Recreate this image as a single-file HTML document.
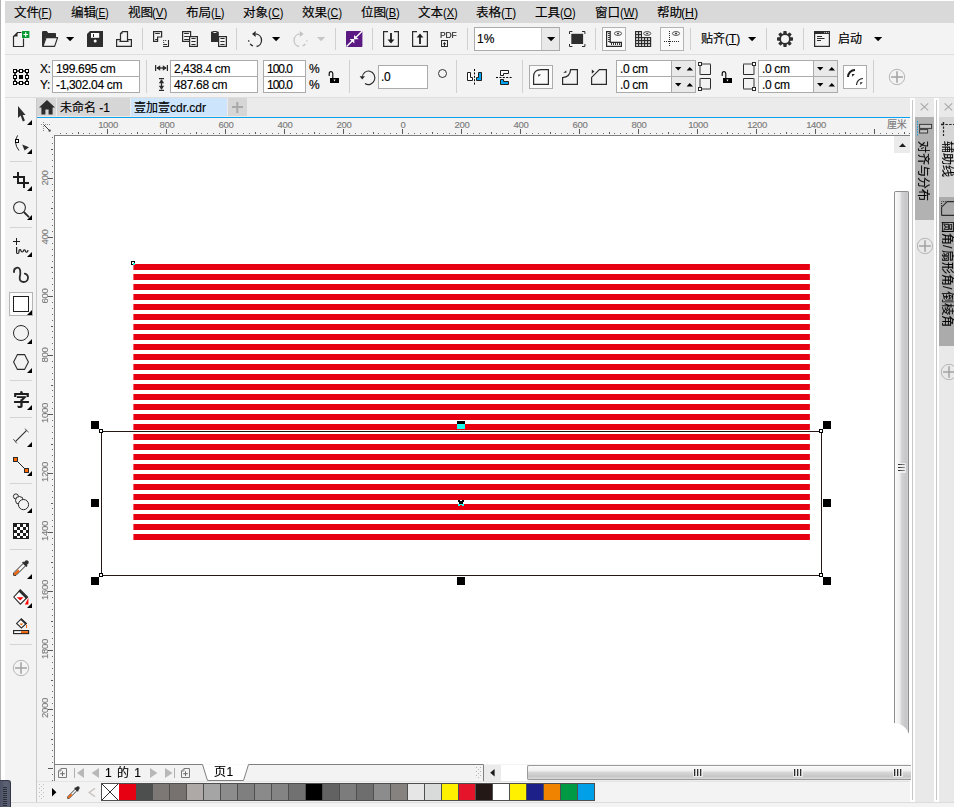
<!DOCTYPE html>
<html lang="zh-CN">
<head>
<meta charset="utf-8">
<title>CorelDRAW</title>
<style>
html,body{margin:0;padding:0;}
body{width:954px;height:807px;overflow:hidden;background:#f3f3f3;font-family:"Liberation Sans","Noto Sans CJK SC",sans-serif;font-size:12px;color:#000;-webkit-text-stroke:0.15px;}
#app{position:relative;width:954px;height:807px;overflow:hidden;background:#f3f3f3;}
.a{position:absolute;}
.a svg{display:block;}
svg{overflow:visible;}
.menu{position:absolute;top:1.5px;height:22px;line-height:22px;font-size:12px;white-space:nowrap;color:#000;transform:scaleX(1.05);transform-origin:0 50%;}
.menu u{text-decoration:underline;text-underline-offset:0.5px;text-decoration-thickness:1px;}
.menu i{font-style:normal;-webkit-text-stroke:0;display:inline-block;transform:scaleX(0.87);transform-origin:0 50%;}
.vsep{position:absolute;width:1px;background:#d0d0d0;}
.inp{position:absolute;box-sizing:border-box;background:#fff;border:1px solid #ababab;font-size:12px;line-height:17px;letter-spacing:-0.33px;padding-left:3px;white-space:nowrap;overflow:hidden;color:#000;}
.lbl{position:absolute;font-size:12px;line-height:14px;white-space:nowrap;}
.rl{position:absolute;font-size:9.5px;line-height:10px;letter-spacing:-0.35px;color:#7c7c7c;white-space:nowrap;}
.rv{position:absolute;font-size:9.5px;line-height:10px;letter-spacing:-0.35px;color:#7c7c7c;white-space:nowrap;transform-origin:0 0;transform:rotate(-90deg);}
.h8{position:absolute;width:8px;height:8px;background:#000;}
.sw{position:absolute;top:783px;width:17px;height:18px;box-sizing:border-box;border:1px solid #5a5a5a;border-left:none;}
.tri{position:absolute;width:0;height:0;border-style:solid;}
.fly{position:absolute;width:0;height:0;border-style:solid;border-width:0 0 5px 5px;border-color:transparent transparent #000 transparent;}
.tsep{position:absolute;left:10px;width:22px;height:1px;background:#d4d4d4;}
</style>
</head>
<body>
<div id="app">

<!-- window frame + menu bar -->
<div class="a" style="left:0;top:0;width:954px;height:1px;background:#fff"></div>
<div class="a" style="left:0;top:0;width:1px;height:807px;background:#b2b2b2"></div>
<div class="a" style="left:1px;top:0;width:4px;height:807px;background:#fff"></div>
<div class="a" style="left:5px;top:1px;width:949px;height:22px;background:#d9d9d9"></div>
<div class="menu" style="left:14px">文件</div><div class="menu" style="left:38.2px"><i style="transform:scaleX(0.855)">(<u>F</u>)</i></div>
<div class="menu" style="left:71px">编辑</div><div class="menu" style="left:95.3px"><i style="transform:scaleX(0.816)">(<u>E</u>)</i></div>
<div class="menu" style="left:128px">视图</div><div class="menu" style="left:151.9px"><i style="transform:scaleX(0.920)">(<u>V</u>)</i></div>
<div class="menu" style="left:186px">布局</div><div class="menu" style="left:210.5px"><i style="transform:scaleX(0.876)">(<u>L</u>)</i></div>
<div class="menu" style="left:243px">对象</div><div class="menu" style="left:268.1px"><i style="transform:scaleX(0.880)">(<u>C</u>)</i></div>
<div class="menu" style="left:302px">效果</div><div class="menu" style="left:327.0px"><i style="transform:scaleX(0.855)">(<u>C</u>)</i></div>
<div class="menu" style="left:361px">位图</div><div class="menu" style="left:385.2px"><i style="transform:scaleX(0.881)">(<u>B</u>)</i></div>
<div class="menu" style="left:418px">文本</div><div class="menu" style="left:443.4px"><i style="transform:scaleX(0.881)">(<u>X</u>)</i></div>
<div class="menu" style="left:476px">表格</div><div class="menu" style="left:501.3px"><i style="transform:scaleX(0.937)">(<u>T</u>)</i></div>
<div class="menu" style="left:535px">工具</div><div class="menu" style="left:560.1px"><i style="transform:scaleX(0.862)">(<u>O</u>)</i></div>
<div class="menu" style="left:594.5px">窗口</div><div class="menu" style="left:619.8px"><i style="transform:scaleX(0.898)">(<u>W</u>)</i></div>
<div class="menu" style="left:656.5px">帮助</div><div class="menu" style="left:681.3px"><i style="transform:scaleX(0.979)">(<u>H</u>)</i></div>
<!-- bar separators -->
<div class="a" style="left:5px;top:54px;width:949px;height:1px;background:#dedede"></div>
<div class="a" style="left:5px;top:97px;width:949px;height:1px;background:#dedede"></div>

<!-- standard toolbar -->
<div class="vsep" style="left:142px;top:28px;height:22px"></div>
<div class="vsep" style="left:236px;top:28px;height:22px"></div>
<div class="vsep" style="left:335px;top:28px;height:22px"></div>
<div class="vsep" style="left:372px;top:28px;height:22px"></div>
<div class="vsep" style="left:467px;top:28px;height:22px"></div>
<div class="vsep" style="left:595px;top:28px;height:22px"></div>
<div class="vsep" style="left:690px;top:28px;height:22px"></div>
<div class="vsep" style="left:766px;top:28px;height:22px"></div>
<div class="vsep" style="left:803px;top:28px;height:22px"></div>
<!-- new -->
<div class="a" style="left:13px;top:31px"><svg width="17" height="16" viewBox="0 0 17 16"><path d="M8.5 1.5H4.5L0.5 5.5V15.5H10.5V7.5" fill="none" stroke="#2b2b2b" stroke-width="1.2"/><path d="M0.5 5.5L4.5 1.5V5.5Z" fill="#2b2b2b"/><rect x="9" y="0" width="7.4" height="7" fill="#069b31"/><path d="M12.7 1.2V5.8M10.4 3.5H15" stroke="#fff" stroke-width="1.2" fill="none"/></svg></div>
<!-- open -->
<div class="a" style="left:42px;top:31px"><svg width="17" height="16" viewBox="0 0 17 16"><path d="M0 1.2Q0 0 1.2 0H4.8L6.2 2H13.2Q14 2 14 2.8V6H4L0.9 15.6H0Z" fill="#2e2e2e"/><path d="M4.1 6.6H15.6L12.6 15.4H1Z" fill="#f3f3f3" stroke="#2e2e2e" stroke-width="1.2" stroke-linejoin="round"/></svg></div>
<div class="a" style="left:66px;top:37px"><svg width="8" height="5" viewBox="0 0 8 5"><path d="M0 0H8.2L4.1 4.3Z" fill="#000"/></svg></div>
<!-- save -->
<div class="a" style="left:87px;top:31px"><svg width="16" height="16" viewBox="0 0 16 16"><path d="M3 0H16V16H0V3Z" fill="#2e2e2e"/><rect x="4" y="2" width="8.2" height="4.8" fill="#fff"/><rect x="6" y="3" width="1" height="3" fill="#2e2e2e"/><circle cx="8.2" cy="10" r="1.5" fill="#fff"/></svg></div>
<!-- print -->
<div class="a" style="left:116px;top:31px"><svg width="16" height="16" viewBox="0 0 16 16"><path d="M4.5 8.6H0.6V15.4H15.4V8.6H11.5" fill="none" stroke="#2b2b2b" stroke-width="1.2"/><path d="M4.5 10.4V2.6L6.6 0.6H11.5V10.4" fill="none" stroke="#2b2b2b" stroke-width="1.2"/><path d="M3.4 10.4H12.6" stroke="#2b2b2b" stroke-width="1.2"/><path d="M6.2 1.6V2.6H5.2" fill="none" stroke="#2b2b2b" stroke-width="0.8"/></svg></div>
<!-- copy properties -->
<div class="a" style="left:153px;top:31px"><svg width="16" height="16" viewBox="0 0 16 16"><path d="M0.6 0.6H8.6V6H4.6V10.4H0.6Z" fill="none" stroke="#2b2b2b" stroke-width="1.2"/><path d="M2.2 2.5H6.8M2.2 8.5H4" stroke="#2b2b2b" stroke-width="1"/><path d="M15.5 9V15.5H10" fill="none" stroke="#2b2b2b" stroke-width="1.1"/><path d="M10.2 9.5H11.2M12.2 9.5H13.2M10.2 11.5H11.2M10.2 13.5H14" stroke="#2b2b2b" stroke-width="1"/></svg></div>
<!-- copy -->
<div class="a" style="left:182px;top:31px"><svg width="16" height="16" viewBox="0 0 16 16"><path d="M7.6 10.4H0.6V0.6H8.6V5" fill="none" stroke="#2b2b2b" stroke-width="1.2"/><path d="M2.2 2.5H6.9M2.2 5.5H6.9M2.2 8.5H6.9" stroke="#2b2b2b" stroke-width="1"/><rect x="7.6" y="5.6" width="7.8" height="9.8" fill="#f3f3f3" stroke="#2b2b2b" stroke-width="1.2"/><path d="M9.4 7.5H13.6M9.4 10.5H13.6M9.4 13.5H13.6" stroke="#2b2b2b" stroke-width="1"/></svg></div>
<!-- paste -->
<div class="a" style="left:211px;top:31px"><svg width="16" height="16" viewBox="0 0 16 16"><path d="M0 1.2Q0 0.6 0.6 0.6H1.5Q1.8 0 2.4 0H5.4Q6 0 6.3 0.6H7.2Q7.8 0.6 7.8 1.2V11H0Z" fill="#2e2e2e"/><path d="M2.4 1.5H5.4" stroke="#fff" stroke-width="0.9"/><rect x="7.6" y="5.6" width="7.8" height="9.8" fill="#f3f3f3" stroke="#2b2b2b" stroke-width="1.2"/><path d="M9.4 7.5H13.6M9.4 10.5H13.6M9.4 13.5H13.6" stroke="#2b2b2b" stroke-width="1"/></svg></div>
<!-- undo -->
<div class="a" style="left:247px;top:31px"><svg width="17" height="16" viewBox="0 0 17 16"><path d="M8.8 2.9A6.4 6.4 0 0 1 9.6 15.5" fill="none" stroke="#2b2b2b" stroke-width="1.3"/><path d="M6 15A6.4 6.4 0 0 1 3.2 12.9" fill="none" stroke="#2b2b2b" stroke-width="1.3"/><path d="M1.9 10.6L1.5 9.3" fill="none" stroke="#2b2b2b" stroke-width="1.3"/><path d="M5 2.9L8.7 0V5.9Z" fill="#2b2b2b"/></svg></div>
<div class="a" style="left:272px;top:37px"><svg width="8" height="5" viewBox="0 0 8 5"><path d="M0 0H8.2L4.1 4.3Z" fill="#000"/></svg></div>
<!-- redo (disabled) -->
<div class="a" style="left:292px;top:31px"><svg width="17" height="16" viewBox="0 0 17 16"><g transform="translate(16.6 0) scale(-1 1)"><path d="M8.8 2.9A6.4 6.4 0 0 1 9.6 15.5" fill="none" stroke="#c3c3c3" stroke-width="1.3"/><path d="M6 15A6.4 6.4 0 0 1 3.2 12.9" fill="none" stroke="#c3c3c3" stroke-width="1.3"/><path d="M1.9 10.6L1.5 9.3" fill="none" stroke="#c3c3c3" stroke-width="1.3"/><path d="M5 2.9L8.7 0V5.9Z" fill="#c3c3c3"/></g></svg></div>
<div class="a" style="left:317px;top:37px"><svg width="8" height="5" viewBox="0 0 8 5"><path d="M0 0H8.2L4.1 4.3Z" fill="#c6c6c6"/></svg></div>
<!-- search content / connect -->
<div class="a" style="left:346px;top:31px"><svg width="17" height="16" viewBox="0 0 17 16"><rect x="0" y="0" width="16.4" height="16" rx="0.8" fill="#5a1a82"/><path d="M16 0.2L10 6.2M6.4 9.8L0.6 15.6" stroke="#fff" stroke-width="1.4"/><path d="M8 8.3V3.9L12.7 8.3Z" fill="#fff"/><path d="M8.3 8V12.4L3.6 8Z" fill="#fff"/></svg></div>
<!-- import -->
<div class="a" style="left:383px;top:31px"><svg width="16" height="16" viewBox="0 0 16 16"><path d="M5 0.6H0.6V15.4H15.4V0.6H11" fill="none" stroke="#2b2b2b" stroke-width="1.2"/><path d="M8 2V11" stroke="#1e1e1e" stroke-width="1.8"/><path d="M4.6 8.4L8 12.4L11.4 8.4Z" fill="#1e1e1e"/></svg></div>
<!-- export -->
<div class="a" style="left:412px;top:31px"><svg width="16" height="16" viewBox="0 0 16 16"><path d="M5 0.6H0.6V15.4H15.4V0.6H11" fill="none" stroke="#2b2b2b" stroke-width="1.2"/><path d="M8 4V13" stroke="#1e1e1e" stroke-width="1.8"/><path d="M4.6 6.6L8 2.6L11.4 6.6Z" fill="#1e1e1e"/></svg></div>
<!-- pdf -->
<div class="a" style="left:440px;top:31px;width:18px;height:8px;font-size:8.5px;line-height:8px;letter-spacing:-0.1px;color:#1a1a1a;will-change:transform;font-family:'Liberation Sans',sans-serif">PDF</div>
<div class="a" style="left:441px;top:40px"><svg width="8" height="7" viewBox="0 0 8 7"><rect x="0.5" y="0.5" width="6" height="6" fill="none" stroke="#2b2b2b" stroke-width="1"/><path d="M3.5 2.5V6" stroke="#2b2b2b" stroke-width="1"/><path d="M1.6 4.2L3.5 2L5.4 4.2Z" fill="#2b2b2b"/></svg></div>
<!-- zoom combo -->
<div class="a" style="left:474px;top:27px;width:86px;height:24px;box-sizing:border-box;border:1px solid #ababab;background:#fff"></div>
<div class="a" style="left:541px;top:28px;width:18px;height:22px;background:#e9e9e9;border-left:1px solid #c4c4c4;box-sizing:border-box"></div>
<div class="a" style="left:547px;top:37px"><svg width="8" height="5" viewBox="0 0 8 5"><path d="M0 0H8.2L4.1 4.3Z" fill="#000"/></svg></div>
<div class="lbl" style="left:477px;top:32px">1%</div>
<!-- full screen preview -->
<div class="a" style="left:569px;top:31px"><svg width="16" height="16" viewBox="0 0 16 16"><rect x="2.3" y="2.8" width="11.8" height="10.2" fill="#2e2e2e"/><path d="M0.5 3V0.5H3.4M13 0.5H15.9V3M15.9 13V15.5H13M3.4 15.5H0.5V13" fill="none" stroke="#2b2b2b" stroke-width="1"/></svg></div>
<!-- show rulers (active) -->
<div class="a" style="left:602px;top:27px;width:24px;height:24px;box-sizing:border-box;border:1px solid #b4b4b4;background:#fafafa"></div>
<div class="a" style="left:606px;top:31px"><svg width="16" height="16" viewBox="0 0 16 16"><path d="M0.6 0.6H4.2V11.4H15.4V15.4H0.6Z" fill="none" stroke="#2b2b2b" stroke-width="1.2"/><path d="M2 2.5H4M2 4.5H4M2 6.5H4M2 8.5H4M2 10.5H4M5.5 12V14M7.5 12V14M9.5 12V14M11.5 12V14M13.5 12V14" stroke="#3a3a3a" stroke-width="1" shape-rendering="crispEdges"/><ellipse cx="12" cy="2.5" rx="3.6" ry="1.9" fill="none" stroke="#3a3a3a" stroke-width="0.9"/><rect x="11" y="1.9" width="2" height="1.3" fill="#3a3a3a"/></svg></div>
<!-- show grid -->
<div class="a" style="left:635px;top:31px"><svg width="17" height="16" viewBox="0 0 17 16"><path d="M0 0H7V6H16.2V16H0Z" fill="#2b2b2b"/><g fill="#fff"><rect x="1.2" y="1.2" width="1.7" height="1.7"/><rect x="4.2" y="1.2" width="1.7" height="1.7"/><rect x="1.2" y="4.2" width="1.7" height="1.7"/><rect x="4.2" y="4.2" width="1.7" height="1.7"/><rect x="1.2" y="7.2" width="1.7" height="1.7"/><rect x="4.2" y="7.2" width="1.7" height="1.7"/><rect x="7.2" y="7.2" width="1.7" height="1.7"/><rect x="10.2" y="7.2" width="1.7" height="1.7"/><rect x="13.2" y="7.2" width="1.7" height="1.7"/><rect x="1.2" y="10.2" width="1.7" height="1.7"/><rect x="4.2" y="10.2" width="1.7" height="1.7"/><rect x="7.2" y="10.2" width="1.7" height="1.7"/><rect x="10.2" y="10.2" width="1.7" height="1.7"/><rect x="13.2" y="10.2" width="1.7" height="1.7"/><rect x="1.2" y="13.2" width="1.7" height="1.7"/><rect x="4.2" y="13.2" width="1.7" height="1.7"/><rect x="7.2" y="13.2" width="1.7" height="1.7"/><rect x="10.2" y="13.2" width="1.7" height="1.7"/><rect x="13.2" y="13.2" width="1.7" height="1.7"/></g><ellipse cx="12.2" cy="2.5" rx="3.6" ry="1.9" fill="#f3f3f3" stroke="#3a3a3a" stroke-width="0.9"/><rect x="11.2" y="1.9" width="2" height="1.3" fill="#3a3a3a"/></svg></div>
<!-- show guidelines (active) -->
<div class="a" style="left:660px;top:27px;width:24px;height:24px;box-sizing:border-box;border:1px solid #b4b4b4;background:#fafafa"></div>
<div class="a" style="left:664px;top:31px"><svg width="16" height="16" viewBox="0 0 16 16"><path d="M5.5 0V16" stroke="#2b2b2b" stroke-width="1" stroke-dasharray="1 1"/><path d="M0 10.5H16" stroke="#2b2b2b" stroke-width="1" stroke-dasharray="1 1"/><ellipse cx="12" cy="2.5" rx="3.6" ry="1.9" fill="none" stroke="#3a3a3a" stroke-width="0.9"/><rect x="11" y="1.9" width="2" height="1.3" fill="#3a3a3a"/></svg></div>
<!-- snap to -->
<div class="lbl" style="left:701px;top:32px">贴齐(<u style="text-underline-offset:1px">T</u>)</div>
<div class="a" style="left:748px;top:37px"><svg width="8" height="5" viewBox="0 0 8 5"><path d="M0 0H8.2L4.1 4.3Z" fill="#000"/></svg></div>
<!-- options gear -->
<div class="a" style="left:777px;top:31px"><svg width="16" height="16" viewBox="0 0 16 16"><g fill="#2e2e2e"><rect x="6.3" y="0" width="3.4" height="16" rx="0.7"/><rect x="6.3" y="0" width="3.4" height="16" rx="0.7" transform="rotate(45 8 8)"/><rect x="6.3" y="0" width="3.4" height="16" rx="0.7" transform="rotate(90 8 8)"/><rect x="6.3" y="0" width="3.4" height="16" rx="0.7" transform="rotate(135 8 8)"/><circle cx="8" cy="8" r="5.8"/></g><circle cx="8" cy="8" r="4" fill="#f3f3f3"/></svg></div>
<!-- launch -->
<div class="a" style="left:814px;top:31px"><svg width="16" height="16" viewBox="0 0 16 16"><rect x="0.6" y="0.6" width="14.8" height="14.8" fill="none" stroke="#2b2b2b" stroke-width="1.2"/><rect x="0.6" y="0.6" width="14.8" height="2.4" fill="#2b2b2b"/><path d="M10.2 1.6H11.2M12 1.6H13M13.8 1.6H14.8" stroke="#fff" stroke-width="0.8"/><path d="M3 5.5H8M3 7.5H10.5M3 9.5H7" stroke="#2b2b2b" stroke-width="1"/></svg></div>
<div class="lbl" style="left:838px;top:32px">启动</div>
<div class="a" style="left:874px;top:37px"><svg width="8" height="5" viewBox="0 0 8 5"><path d="M0 0H8.2L4.1 4.3Z" fill="#000"/></svg></div>

<!-- property bar -->
<div class="vsep" style="left:146px;top:60px;height:33px"></div>
<div class="vsep" style="left:349px;top:60px;height:33px"></div>
<div class="vsep" style="left:456px;top:60px;height:33px"></div>
<div class="vsep" style="left:522px;top:60px;height:33px"></div>
<div class="vsep" style="left:873px;top:60px;height:33px"></div>
<!-- object origin -->
<div class="a" style="left:13px;top:69px"><svg width="16" height="16" viewBox="0 0 16 16"><path d="M2 2H14V14H2Z" fill="none" stroke="#000" stroke-width="1.6"/><g fill="#fff" stroke="#000" stroke-width="1"><rect x="0.5" y="0.5" width="3" height="3"/><rect x="6.5" y="0.5" width="3" height="3"/><rect x="12.5" y="0.5" width="3" height="3"/><rect x="0.5" y="6.5" width="3" height="3"/><rect x="12.5" y="6.5" width="3" height="3"/><rect x="0.5" y="12.5" width="3" height="3"/><rect x="6.5" y="12.5" width="3" height="3"/><rect x="12.5" y="12.5" width="3" height="3"/></g><rect x="6" y="6" width="4" height="4" fill="#000"/></svg></div>
<div class="lbl" style="left:40px;top:61.5px;letter-spacing:-0.4px">X:</div>
<div class="lbl" style="left:40px;top:77.5px;letter-spacing:-0.4px">Y:</div>
<div class="inp" style="left:52px;top:60px;width:88px;height:17px">199.695 cm</div>
<div class="inp" style="left:52px;top:76px;width:88px;height:17px">-1,302.04 cm</div>
<!-- size -->
<div class="a" style="left:155px;top:65px"><svg width="13" height="6" viewBox="0 0 13 6"><path d="M0.6 0V6M12.4 0V6" stroke="#2b2b2b" stroke-width="1.2"/><path d="M2 3H11" stroke="#2b2b2b" stroke-width="1.3"/><path d="M1.2 3L5.2 0.3V5.7ZM11.8 3L7.8 0.3V5.7Z" fill="#2b2b2b"/></svg></div>
<div class="a" style="left:159px;top:78px"><svg width="5" height="13" viewBox="0 0 5 13"><path d="M0 0.6H5M0 12.4H5" stroke="#2b2b2b" stroke-width="1.2"/><path d="M2.5 2V11" stroke="#2b2b2b" stroke-width="1.3"/><path d="M2.5 1.2L-0.2 5.2H5.2ZM2.5 11.8L-0.2 7.8H5.2Z" fill="#2b2b2b"/></svg></div>
<div class="inp" style="left:170px;top:60px;width:88px;height:17px">2,438.4 cm</div>
<div class="inp" style="left:170px;top:76px;width:88px;height:17px">487.68 cm</div>
<div class="inp" style="left:263px;top:60px;width:43px;height:17px;letter-spacing:-1px">100.0</div>
<div class="inp" style="left:263px;top:76px;width:43px;height:17px;letter-spacing:-1px">100.0</div>
<div class="lbl" style="left:309px;top:61.5px;letter-spacing:-0.5px">%</div>
<div class="lbl" style="left:309px;top:77.5px;letter-spacing:-0.5px">%</div>
<!-- lock ratio -->
<div class="a" style="left:328px;top:71px"><svg width="11" height="12" viewBox="0 0 11 12"><path d="M1.2 5V2.6Q1.2 0.6 3 0.6Q4.8 0.6 4.8 2.6V7" fill="none" stroke="#000" stroke-width="1.1"/><rect x="2" y="7" width="9" height="5" fill="#000"/><path d="M5.5 8.4H7.5L6.5 10.4Z" fill="#fff"/></svg></div>
<!-- rotation -->
<div class="a" style="left:359px;top:70px"><svg width="16" height="15" viewBox="0 0 16 15"><path d="M3.2 7.5A6.3 6.8 0 1 1 6 13.5" fill="none" stroke="#2b2b2b" stroke-width="1.1"/><path d="M0.6 6.2H6L3.2 9.6Z" fill="#2b2b2b"/></svg></div>
<div class="inp" style="left:378px;top:65px;width:50px;height:24px;line-height:22px;padding-left:2px">.0</div>
<div class="a" style="left:438px;top:69px;width:9px;height:9px;box-sizing:border-box;border:1.2px solid #333;border-radius:50%"></div>
<!-- mirror h -->
<div class="a" style="left:467px;top:69px"><svg width="16" height="16" viewBox="0 0 16 16"><path d="M7.5 0V16" stroke="#000" stroke-width="1" stroke-dasharray="2 1.4"/><path d="M0.5 3.5H3.5V8.5H5.5V11.5H0.5Z" fill="#fff" stroke="#1e1e1e" stroke-width="1"/><path d="M14.5 3.5H11.5V8.5H9.5V11.5H14.5Z" fill="#00a2f2" stroke="#1e1e1e" stroke-width="1"/></svg></div>
<!-- mirror v -->
<div class="a" style="left:496px;top:70px"><svg width="16" height="16" viewBox="0 0 16 16"><path d="M0 7.5H16" stroke="#000" stroke-width="1" stroke-dasharray="2 1.4"/><path d="M4.5 0.5H12.5V3.5H7.5V5.5H4.5Z" fill="#fff" stroke="#1e1e1e" stroke-width="1"/><path d="M4.5 14.5H12.5V11.5H7.5V9.5H4.5Z" fill="#00a2f2" stroke="#1e1e1e" stroke-width="1"/></svg></div>
<!-- corner types -->
<div class="a" style="left:529px;top:65px;width:24px;height:24px;box-sizing:border-box;border:1px solid #ababab;background:#fafafa"></div>
<div class="a" style="left:533px;top:69px"><svg width="16" height="16" viewBox="0 0 16 16"><path d="M0.6 15.4V8Q0.6 0.6 8 0.6H15.4V15.4Z" fill="none" stroke="#2b2b2b" stroke-width="1.2"/><path d="M5 5.4H8L5.6 7.8Z" fill="#2b2b2b"/></svg></div>
<div class="a" style="left:562px;top:69px"><svg width="16" height="16" viewBox="0 0 16 16"><path d="M0.6 15.4V8.6Q8 8 8.6 0.6H15.4V15.4Z" fill="none" stroke="#2b2b2b" stroke-width="1.2"/><path d="M1.2 3.8L4.4 1.4V3.8Z" fill="#2b2b2b"/></svg></div>
<div class="a" style="left:591px;top:69px"><svg width="16" height="16" viewBox="0 0 16 16"><path d="M0.6 15.4V8.4L8.4 0.6H15.4V15.4Z" fill="none" stroke="#2b2b2b" stroke-width="1.2"/><path d="M0.8 0.6L3.4 2.6L0.8 4.8Z" fill="#2b2b2b"/></svg></div>
<!-- corner radius 1 -->
<div class="inp" style="left:616px;top:60px;width:80px;height:17px">.0 cm</div>
<div class="inp" style="left:616px;top:76px;width:80px;height:17px">.0 cm</div>
<div class="a" style="left:671px;top:61px;width:24px;height:15px;background:#e9e9e9;border-left:1px solid #ababab;box-sizing:border-box"></div>
<div class="a" style="left:671px;top:77px;width:24px;height:15px;background:#e9e9e9;border-left:1px solid #ababab;box-sizing:border-box"></div>
<div class="a" style="left:675px;top:67px"><svg width="18" height="4" viewBox="0 0 18 4"><path d="M0 0H6.4L3.2 3.4ZM11.6 3.4H18L14.8 0Z" fill="#000"/></svg></div>
<div class="a" style="left:675px;top:83px"><svg width="18" height="4" viewBox="0 0 18 4"><path d="M0 0H6.4L3.2 3.4ZM11.6 3.4H18L14.8 0Z" fill="#000"/></svg></div>
<div class="a" style="left:698px;top:62px"><svg width="14" height="30" viewBox="0 0 14 30"><path d="M2 2H12.5V12.5H2Z" fill="none" stroke="#2b2b2b" stroke-width="1"/><path d="M2 12.5V2H12.5" fill="none" stroke="#9a9a9a" stroke-width="1.4"/><rect x="0.5" y="0.5" width="3" height="3" fill="#fff" stroke="#2b2b2b" stroke-width="1"/><path d="M2 16.5H12.5V27H2Z" fill="none" stroke="#2b2b2b" stroke-width="1"/><path d="M2 16.5V27H12.5" fill="none" stroke="#9a9a9a" stroke-width="1.4"/><rect x="0.5" y="25.5" width="3" height="3" fill="#fff" stroke="#2b2b2b" stroke-width="1"/></svg></div>
<div class="a" style="left:721px;top:71px"><svg width="11" height="12" viewBox="0 0 11 12"><path d="M1.2 5V2.6Q1.2 0.6 3 0.6Q4.8 0.6 4.8 2.6V7" fill="none" stroke="#000" stroke-width="1.1"/><rect x="2" y="7" width="9" height="5" fill="#000"/><path d="M5.5 8.4H7.5L6.5 10.4Z" fill="#fff"/></svg></div>
<div class="a" style="left:743px;top:62px"><svg width="14" height="30" viewBox="0 0 14 30"><path d="M0.5 2H11V12.5H0.5Z" fill="none" stroke="#2b2b2b" stroke-width="1"/><path d="M0.5 2H11V12.5" fill="none" stroke="#9a9a9a" stroke-width="1.4"/><rect x="9.5" y="0.5" width="3" height="3" fill="#fff" stroke="#2b2b2b" stroke-width="1"/><path d="M0.5 16.5H11V27H0.5Z" fill="none" stroke="#2b2b2b" stroke-width="1"/><path d="M11 16.5V27H0.5" fill="none" stroke="#9a9a9a" stroke-width="1.4"/><rect x="9.5" y="25.5" width="3" height="3" fill="#fff" stroke="#2b2b2b" stroke-width="1"/></svg></div>
<!-- corner radius 2 -->
<div class="inp" style="left:758px;top:60px;width:80px;height:17px">.0 cm</div>
<div class="inp" style="left:758px;top:76px;width:80px;height:17px">.0 cm</div>
<div class="a" style="left:813px;top:61px;width:24px;height:15px;background:#e9e9e9;border-left:1px solid #ababab;box-sizing:border-box"></div>
<div class="a" style="left:813px;top:77px;width:24px;height:15px;background:#e9e9e9;border-left:1px solid #ababab;box-sizing:border-box"></div>
<div class="a" style="left:817px;top:67px"><svg width="18" height="4" viewBox="0 0 18 4"><path d="M0 0H6.4L3.2 3.4ZM11.6 3.4H18L14.8 0Z" fill="#000"/></svg></div>
<div class="a" style="left:817px;top:83px"><svg width="18" height="4" viewBox="0 0 18 4"><path d="M0 0H6.4L3.2 3.4ZM11.6 3.4H18L14.8 0Z" fill="#000"/></svg></div>
<!-- relative corner scaling -->
<div class="a" style="left:843px;top:65px;width:24px;height:24px;box-sizing:border-box;border:1px solid #ababab;background:#fff"></div>
<div class="a" style="left:847px;top:69px"><svg width="16" height="16" viewBox="0 0 16 16"><path d="M1 8A7 7 0 0 1 8 1" fill="none" stroke="#1e1e1e" stroke-width="2"/><path d="M4.9 5.1H7.8L5.3 7.8Z" fill="#1e1e1e"/><path d="M9.5 16A6.5 6.5 0 0 1 16 9.5" fill="none" stroke="#1e1e1e" stroke-width="1.2"/><path d="M13.1 13.3H15.8L13.4 15.8Z" fill="#1e1e1e"/></svg></div>
<!-- quick customize -->
<div class="a" style="left:889px;top:69px"><svg width="16" height="16" viewBox="0 0 16 16"><circle cx="8" cy="8" r="7.7" fill="none" stroke="#b6b6b6" stroke-width="1"/><path d="M8 2.2V13.8M2.1 8H13.9" stroke="#a2a2a2" stroke-width="1.5"/></svg></div>

<!-- toolbox -->
<div class="a" style="left:36px;top:98px;width:1px;height:704px;background:#c9c9c9"></div>
<div class="tsep" style="top:161px"></div>
<div class="tsep" style="top:227px"></div>
<div class="tsep" style="top:380px"></div>
<div class="tsep" style="top:417px"></div>
<div class="tsep" style="top:483px"></div>
<div class="tsep" style="top:549px"></div>
<div class="tsep" style="top:644px"></div>
<!-- pick -->
<div class="a" style="left:18px;top:106px"><svg width="8" height="16" viewBox="0 0 8 16"><path d="M0 0V12L2.6 9.6L4.8 15.4L6.9 14.5L4.7 8.9H7.6Z" fill="#2e2e2e"/></svg></div>
<div class="fly" style="left:27px;top:120px"></div>
<!-- shape -->
<div class="a" style="left:14px;top:135px"><svg width="16" height="16" viewBox="0 0 16 16"><path d="M3.6 0.4Q-1 8 5 15.6" fill="none" stroke="#2b2b2b" stroke-width="1"/><rect x="1.5" y="4.5" width="3" height="3" fill="#fff" stroke="#000" stroke-width="1"/><path d="M8.2 9.6L15 12.2L10.6 15.6Z" fill="#2b2b2b"/></svg></div>
<div class="fly" style="left:27px;top:149px"></div>
<!-- crop -->
<div class="a" style="left:13px;top:172px"><svg width="16" height="16" viewBox="0 0 16 16"><path d="M5 0V11H16M0 5H11V16" fill="none" stroke="#1e1e1e" stroke-width="2"/></svg></div>
<div class="fly" style="left:27px;top:186px"></div>
<!-- zoom -->
<div class="a" style="left:13px;top:201px"><svg width="17" height="17" viewBox="0 0 17 17"><circle cx="6.5" cy="6.6" r="5.9" fill="none" stroke="#2b2b2b" stroke-width="1.1"/><path d="M10.8 11L16 16.2" stroke="#2b2b2b" stroke-width="1.8"/></svg></div>
<div class="fly" style="left:27px;top:215px"></div>
<!-- freehand -->
<div class="a" style="left:13px;top:238px"><svg width="17" height="17" viewBox="0 0 17 17"><path d="M3.5 0V7M0 3.5H7" stroke="#1e1e1e" stroke-width="1" fill="none"/><path d="M3.6 9V14.4Q3.6 15.5 4.7 15.5Q6 15.5 6 14V12.6Q6 11.6 7 11.6Q8 11.6 8 12.8Q8 14 9.2 14Q10.4 14 10.4 12.8Q10.4 11.8 11.4 11.8Q12.4 11.8 12.4 13Q12.4 14.2 13.6 14.2Q14.8 14.2 14.8 13V12" fill="none" stroke="#1e1e1e" stroke-width="1.2"/></svg></div>
<div class="fly" style="left:27px;top:252px"></div>
<!-- artistic media -->
<div class="a" style="left:13px;top:267px"><svg width="16" height="16" viewBox="0 0 16 16"><path d="M1 5.2Q0.6 1.6 3.4 0.8Q6.6 0 7.2 3.6Q7.6 6.6 6.8 9.6Q6 14.6 10.4 15Q14.6 15 15 11Q15.2 7.6 11.8 6.6" fill="none" stroke="#2b2b2b" stroke-width="1.8" stroke-linecap="round"/></svg></div>
<!-- rectangle (active) -->
<div class="a" style="left:9px;top:292px;width:24px;height:24px;box-sizing:border-box;border:1px solid #b4b4b4;background:#fafafa"></div>
<div class="a" style="left:13px;top:296px;width:16px;height:16px;box-sizing:border-box;border:1.2px solid #1e1e1e;background:#fff"></div>
<div class="fly" style="left:27px;top:310px"></div>
<!-- ellipse -->
<div class="a" style="left:13px;top:325px;width:16px;height:16px;box-sizing:border-box;border:1.1px solid #2b2b2b;border-radius:50%"></div>
<div class="fly" style="left:27px;top:339px"></div>
<!-- polygon -->
<div class="a" style="left:13px;top:354px"><svg width="16" height="16" viewBox="0 0 16 16"><path d="M0.6 8L4.4 0.6H11.6L15.4 8L11.6 15.4H4.4Z" fill="none" stroke="#2b2b2b" stroke-width="1.1"/></svg></div>
<div class="fly" style="left:27px;top:368px"></div>
<!-- text -->
<div class="a" style="left:12.5px;top:389.5px;width:17px;height:18px;font-size:17px;line-height:18px;font-weight:700;color:#1e1e1e;will-change:transform;font-family:'Noto Sans CJK SC','WenQuanYi Zen Hei',sans-serif">字</div>
<div class="fly" style="left:27px;top:405px"></div>
<!-- dimension -->
<div class="a" style="left:13px;top:428px"><svg width="16" height="16" viewBox="0 0 16 16"><path d="M2.4 13.6L13.6 2.4" stroke="#2b2b2b" stroke-width="1.1"/><path d="M0.4 11.2L3.8 15.4M11.8 0.6L15.6 4.2" stroke="#555" stroke-width="1"/></svg></div>
<div class="fly" style="left:27px;top:442px"></div>
<!-- connector -->
<div class="a" style="left:13px;top:457px"><svg width="16" height="16" viewBox="0 0 16 16"><path d="M2.5 2.5L13.5 13.5" stroke="#1e1e1e" stroke-width="1"/><rect x="0.5" y="0.5" width="4" height="4" fill="#ff6a00" stroke="#2b2b2b" stroke-width="1"/><rect x="11.5" y="11.5" width="4" height="4" fill="#ff6a00" stroke="#2b2b2b" stroke-width="1"/></svg></div>
<div class="fly" style="left:27px;top:471px"></div>
<!-- blend -->
<div class="a" style="left:13px;top:493px"><svg width="17" height="17" viewBox="0 0 17 17"><circle cx="2.9" cy="3.4" r="2.5" fill="#f3f3f3" stroke="#2b2b2b" stroke-width="1"/><circle cx="6.4" cy="7.4" r="3.9" fill="#f3f3f3" stroke="#2b2b2b" stroke-width="1"/><circle cx="10.5" cy="11.6" r="5.1" fill="#f3f3f3" stroke="#2b2b2b" stroke-width="1"/></svg></div>
<div class="fly" style="left:27px;top:508px"></div>
<!-- transparency -->
<div class="a" style="left:13px;top:523px"><svg width="16" height="16" viewBox="0 0 16 16"><rect x="0" y="0" width="16" height="16" fill="#1e1e1e"/><g fill="#fff"><rect x="4" y="1" width="3" height="3"/><rect x="10" y="1" width="3" height="3"/><rect x="1" y="4" width="3" height="3"/><rect x="7" y="4" width="3" height="3"/><rect x="13" y="4" width="2" height="3"/><rect x="4" y="7" width="3" height="3"/><rect x="10" y="7" width="3" height="3"/><rect x="1" y="10" width="3" height="3"/><rect x="7" y="10" width="3" height="3"/><rect x="13" y="10" width="2" height="3"/><rect x="4" y="13" width="3" height="2"/><rect x="10" y="13" width="3" height="2"/></g></svg></div>
<!-- eyedropper -->
<div class="a" style="left:13px;top:560px"><svg width="16" height="16" viewBox="0 0 16 16"><path d="M10.2 3.4L12.6 5.8L3 15.4L0.6 15.4L0.6 13Z" fill="#f3f3f3" stroke="#2b2b2b" stroke-width="1"/><path d="M5.2 9.6L6.6 11L2.6 15L0.8 15.2L1 13.4Z" fill="#f06000"/><path d="M9 2.6L13.4 7L14.6 5.8L13.8 5L15.4 3.4Q16.4 2 15 0.8Q13.8 -0.4 12.6 0.6L11 2.2L10.2 1.4Z" fill="#2e2e2e"/></svg></div>
<div class="fly" style="left:27px;top:574px"></div>
<!-- interactive fill -->
<div class="a" style="left:13px;top:589px"><svg width="17" height="17" viewBox="0 0 17 17"><path d="M7.4 0.8L14.6 8L7.4 15.2L0.8 8Z" fill="#fff" stroke="#2b2b2b" stroke-width="1.1"/><path d="M7 0.6L14.8 8.4L13.2 10L5.4 2.2Z" fill="#2b2b2b"/><path d="M3.8 8.2H10.6L7.2 11.4Z" fill="#f00"/><path d="M15.4 9V15.4H11.8Q13.4 13 15.4 9Z" fill="#f00"/></svg></div>
<div class="fly" style="left:27px;top:603px"></div>
<!-- smart fill -->
<div class="a" style="left:13px;top:618px"><svg width="17" height="17" viewBox="0 0 17 17"><path d="M8.4 0.8L13.4 5.4L8.4 10L3.6 5.4Z" fill="#fff" stroke="#2b2b2b" stroke-width="1.1"/><path d="M8.2 0.4L13.8 5.6L12.6 6.8L7 1.6Z" fill="#2b2b2b"/><path d="M6.4 5.6H10.4L8.4 7.4Z" fill="#f06000"/><path d="M13.6 7V10" stroke="#f06000" stroke-width="1"/><rect x="0.6" y="12.6" width="15" height="3" fill="#fff" stroke="#1e1e1e" stroke-width="1.1"/><rect x="8" y="13.2" width="7" height="1.9" fill="#f06000"/></svg></div>
<!-- quick customize -->
<div class="a" style="left:13px;top:660px"><svg width="16" height="16" viewBox="0 0 16 16"><circle cx="8" cy="8" r="7.7" fill="none" stroke="#b6b6b6" stroke-width="1"/><path d="M8 2.2V13.8M2.1 8H13.9" stroke="#a2a2a2" stroke-width="1.5"/></svg></div>

<!-- document tabs -->
<div class="a" style="left:37px;top:98px;width:873px;height:19px;background:#ebebeb"></div>
<div class="a" style="left:37px;top:98px;width:19px;height:18px;background:#d6d6d6"></div>
<div class="a" style="left:57px;top:98px;width:73px;height:18px;background:#d6d6d6"></div>
<div class="a" style="left:131px;top:98px;width:96px;height:18px;background:#cce4fc"></div>
<div class="a" style="left:228px;top:98px;width:19px;height:18px;background:#d6d6d6"></div>
<div class="a" style="left:37px;top:116px;width:210px;height:1px;background:#f1e9e4"></div>
<div class="a" style="left:37px;top:117px;width:873px;height:1px;background:#0ca0f0"></div>
<div class="a" style="left:39px;top:100px"><svg width="16" height="15" viewBox="0 0 16 15"><path d="M8 0L16 7.6H13.6V14.6H9.6V9.6H6.4V14.6H2.4V7.6H0Z" fill="#2e2e2e"/></svg></div>
<div class="lbl" style="left:60px;top:101px;line-height:15px">未命名 -1</div>
<div class="lbl" style="left:134px;top:101px;line-height:15px">壹加壹cdr.cdr</div>
<div class="a" style="left:231px;top:101px"><svg width="13" height="13" viewBox="0 0 13 13"><path d="M6.3 1V12M1 6H12" stroke="#a9a9a9" stroke-width="2"/></svg></div>

<!-- rulers + drawing window -->
<div class="a" style="left:37px;top:118px;width:873px;height:17px;background:#f3f3f3"></div>
<div class="a" style="left:55px;top:136px;width:855px;height:628px;background:#fff"></div>
<div class="a" style="left:54px;top:135px;width:856px;height:1px;background:#808080"></div>
<div class="a" style="left:54px;top:135px;width:1px;height:646px;background:#808080"></div>
<div class="a" style="left:41px;top:122px"><svg width="10" height="10" viewBox="0 0 10 10"><path d="M0 2.5H10" stroke="#8a8a8a" stroke-width="1" stroke-dasharray="1 1"/><path d="M2.5 0V10" stroke="#8a8a8a" stroke-width="1" stroke-dasharray="1 1"/><path d="M3 3L8.6 8.6" stroke="#3a3a3a" stroke-width="1"/><rect x="7.6" y="7.6" width="2" height="2" fill="#3a3a3a"/></svg></div>
<div class="a" style="left:54px;top:118px"><svg width="856" height="17" viewBox="0 0 856 17" shape-rendering="crispEdges"><path d="M53.5 11V16M112.5 11V16M171.5 11V16M230.5 11V16M289.5 11V16M348.5 11V16M407.5 11V16M466.5 11V16M525.5 11V16M584.5 11V16M643.5 11V16M702.5 11V16M761.5 11V16M820.5 11V16" stroke="#5a5a5a" stroke-width="1"/><path d="M24.5 14V16M83.5 14V16M142.5 14V16M201.5 14V16M260.5 14V16M319.5 14V16M378.5 14V16M437.5 14V16M496.5 14V16M555.5 14V16M614.5 14V16M673.5 14V16M732.5 14V16M791.5 14V16M850.5 14V16" stroke="#5a5a5a" stroke-width="1"/><path d="M6.5 15V16M12.5 15V16M18.5 15V16M29.5 15V16M35.5 15V16M41.5 15V16M47.5 15V16M59.5 15V16M65.5 15V16M71.5 15V16M77.5 15V16M88.5 15V16M94.5 15V16M100.5 15V16M106.5 15V16M118.5 15V16M124.5 15V16M130.5 15V16M136.5 15V16M147.5 15V16M153.5 15V16M159.5 15V16M165.5 15V16M177.5 15V16M183.5 15V16M189.5 15V16M195.5 15V16M206.5 15V16M212.5 15V16M218.5 15V16M224.5 15V16M236.5 15V16M242.5 15V16M248.5 15V16M254.5 15V16M265.5 15V16M271.5 15V16M277.5 15V16M283.5 15V16M295.5 15V16M301.5 15V16M307.5 15V16M313.5 15V16M324.5 15V16M330.5 15V16M336.5 15V16M342.5 15V16M354.5 15V16M360.5 15V16M366.5 15V16M372.5 15V16M383.5 15V16M389.5 15V16M395.5 15V16M401.5 15V16M413.5 15V16M419.5 15V16M425.5 15V16M431.5 15V16M442.5 15V16M448.5 15V16M454.5 15V16M460.5 15V16M472.5 15V16M478.5 15V16M484.5 15V16M490.5 15V16M501.5 15V16M507.5 15V16M513.5 15V16M519.5 15V16M531.5 15V16M537.5 15V16M543.5 15V16M549.5 15V16M560.5 15V16M566.5 15V16M572.5 15V16M578.5 15V16M590.5 15V16M596.5 15V16M602.5 15V16M608.5 15V16M619.5 15V16M625.5 15V16M631.5 15V16M637.5 15V16M649.5 15V16M655.5 15V16M661.5 15V16M667.5 15V16M678.5 15V16M684.5 15V16M690.5 15V16M696.5 15V16M708.5 15V16M714.5 15V16M720.5 15V16M726.5 15V16M737.5 15V16M743.5 15V16M749.5 15V16M755.5 15V16M767.5 15V16M773.5 15V16M779.5 15V16M785.5 15V16M796.5 15V16M802.5 15V16M808.5 15V16M814.5 15V16M826.5 15V16M832.5 15V16M838.5 15V16M844.5 15V16M855.5 15V16" stroke="#6e6e6e" stroke-width="1"/></svg></div>
<div class="rl" style="left:88px;top:120px;width:40px;text-align:center">1000</div>
<div class="rl" style="left:147px;top:120px;width:40px;text-align:center">800</div>
<div class="rl" style="left:206px;top:120px;width:40px;text-align:center">600</div>
<div class="rl" style="left:265px;top:120px;width:40px;text-align:center">400</div>
<div class="rl" style="left:324px;top:120px;width:40px;text-align:center">200</div>
<div class="rl" style="left:383px;top:120px;width:40px;text-align:center">0</div>
<div class="rl" style="left:442px;top:120px;width:40px;text-align:center">200</div>
<div class="rl" style="left:501px;top:120px;width:40px;text-align:center">400</div>
<div class="rl" style="left:560px;top:120px;width:40px;text-align:center">600</div>
<div class="rl" style="left:619px;top:120px;width:40px;text-align:center">800</div>
<div class="rl" style="left:678px;top:120px;width:40px;text-align:center">1000</div>
<div class="rl" style="left:737px;top:120px;width:40px;text-align:center">1200</div>
<div class="rl" style="left:796px;top:120px;width:40px;text-align:center">1400</div>
<div class="rl" style="left:887px;top:119px;font-size:10px;line-height:11px">厘米</div>
<div class="a" style="left:37px;top:136px"><svg width="17" height="645" viewBox="0 0 17 645" shape-rendering="crispEdges"><path d="M11 42.5H16M11 101.5H16M11 160.5H16M11 219.5H16M11 278.5H16M11 337.5H16M11 396.5H16M11 455.5H16M11 514.5H16M11 573.5H16M11 632.5H16" stroke="#5a5a5a" stroke-width="1"/><path d="M14 13.5H16M14 72.5H16M14 131.5H16M14 190.5H16M14 249.5H16M14 308.5H16M14 367.5H16M14 426.5H16M14 485.5H16M14 544.5H16M14 603.5H16" stroke="#5a5a5a" stroke-width="1"/><path d="M15 1.5H16M15 7.5H16M15 18.5H16M15 24.5H16M15 30.5H16M15 36.5H16M15 48.5H16M15 54.5H16M15 60.5H16M15 66.5H16M15 77.5H16M15 83.5H16M15 89.5H16M15 95.5H16M15 107.5H16M15 113.5H16M15 119.5H16M15 125.5H16M15 136.5H16M15 142.5H16M15 148.5H16M15 154.5H16M15 166.5H16M15 172.5H16M15 178.5H16M15 184.5H16M15 195.5H16M15 201.5H16M15 207.5H16M15 213.5H16M15 225.5H16M15 231.5H16M15 237.5H16M15 243.5H16M15 254.5H16M15 260.5H16M15 266.5H16M15 272.5H16M15 284.5H16M15 290.5H16M15 296.5H16M15 302.5H16M15 313.5H16M15 319.5H16M15 325.5H16M15 331.5H16M15 343.5H16M15 349.5H16M15 355.5H16M15 361.5H16M15 372.5H16M15 378.5H16M15 384.5H16M15 390.5H16M15 402.5H16M15 408.5H16M15 414.5H16M15 420.5H16M15 431.5H16M15 437.5H16M15 443.5H16M15 449.5H16M15 461.5H16M15 467.5H16M15 473.5H16M15 479.5H16M15 490.5H16M15 496.5H16M15 502.5H16M15 508.5H16M15 520.5H16M15 526.5H16M15 532.5H16M15 538.5H16M15 549.5H16M15 555.5H16M15 561.5H16M15 567.5H16M15 579.5H16M15 585.5H16M15 591.5H16M15 597.5H16M15 608.5H16M15 614.5H16M15 620.5H16M15 626.5H16M15 638.5H16M15 644.5H16" stroke="#6e6e6e" stroke-width="1"/></svg></div>
<div class="rv" style="left:40px;top:197.5px;width:40px;text-align:center">200</div>
<div class="rv" style="left:40px;top:256.5px;width:40px;text-align:center">400</div>
<div class="rv" style="left:40px;top:315.5px;width:40px;text-align:center">600</div>
<div class="rv" style="left:40px;top:374.5px;width:40px;text-align:center">800</div>
<div class="rv" style="left:40px;top:432.5px;width:40px;text-align:center">1000</div>
<div class="rv" style="left:40px;top:491.5px;width:40px;text-align:center">1200</div>
<div class="rv" style="left:40px;top:550.5px;width:40px;text-align:center">1400</div>
<div class="rv" style="left:40px;top:609.5px;width:40px;text-align:center">1600</div>
<div class="rv" style="left:40px;top:668.5px;width:40px;text-align:center">1800</div>
<div class="rv" style="left:40px;top:727.5px;width:40px;text-align:center">2000</div>
<div class="a" style="left:0;top:0"><svg width="954" height="807" viewBox="0 0 954 807"><path d="M133.4 264h676.5v6h-676.5zM133.4 274h676.5v6h-676.5zM133.4 284h676.5v6h-676.5zM133.4 294h676.5v6h-676.5zM133.4 304h676.5v6h-676.5zM133.4 314h676.5v6h-676.5zM133.4 324h676.5v6h-676.5zM133.4 334h676.5v6h-676.5zM133.4 344h676.5v6h-676.5zM133.4 354h676.5v6h-676.5zM133.4 364h676.5v6h-676.5zM133.4 374h676.5v6h-676.5zM133.4 384h676.5v6h-676.5zM133.4 394h676.5v6h-676.5zM133.4 404h676.5v6h-676.5zM133.4 414h676.5v6h-676.5zM133.4 424h676.5v6h-676.5zM133.4 434h676.5v6h-676.5zM133.4 444h676.5v6h-676.5zM133.4 454h676.5v6h-676.5zM133.4 464h676.5v6h-676.5zM133.4 474h676.5v6h-676.5zM133.4 484h676.5v6h-676.5zM133.4 494h676.5v6h-676.5zM133.4 504h676.5v6h-676.5zM133.4 514h676.5v6h-676.5zM133.4 524h676.5v6h-676.5zM133.4 534h676.5v6h-676.5z" fill="#e60012"/></svg></div>
<div class="a" style="left:101px;top:431px;width:721px;height:145px;box-sizing:border-box;border:1px solid #231815"></div>
<div class="a" style="left:99px;top:429px;width:4px;height:4px;box-sizing:border-box;border:1px solid #000;background:#fff"></div>
<div class="a" style="left:819px;top:429px;width:4px;height:4px;box-sizing:border-box;border:1px solid #000;background:#fff"></div>
<div class="a" style="left:99px;top:573px;width:4px;height:4px;box-sizing:border-box;border:1px solid #000;background:#fff"></div>
<div class="a" style="left:819px;top:573px;width:4px;height:4px;box-sizing:border-box;border:1px solid #000;background:#fff"></div>
<div class="a" style="left:131px;top:261px;width:4px;height:4px;box-sizing:border-box;border:1px solid #000;background:#fff"></div>
<div class="a" style="left:133px;top:263px;width:2px;height:2px;background:#19ffed"></div>
<div class="h8" style="left:91px;top:421px"></div>
<div class="h8" style="left:457px;top:421px"></div>
<div class="h8" style="left:823px;top:421px"></div>
<div class="h8" style="left:91px;top:499px"></div>
<div class="h8" style="left:823px;top:499px"></div>
<div class="h8" style="left:91px;top:577px"></div>
<div class="h8" style="left:457px;top:577px"></div>
<div class="h8" style="left:823px;top:577px"></div>
<div class="a" style="left:457px;top:424px;width:8px;height:5px;background:#19ffed"></div>
<div class="a" style="left:458px;top:500px"><svg width="6" height="6" viewBox="0 0 6 6" shape-rendering="crispEdges"><path d="M0 0h2v1h2v-1h2v2h-1v2h-4v-2h-1z" fill="#000"/><path d="M0 4h6v2h-2v-1h-2v1h-2z" fill="#19ffed"/></svg></div>
<div class="a" style="left:894px;top:136px;width:16px;height:17px;background:#ebebeb"></div>
<div class="a" style="left:899px;top:143px"><svg width="7" height="4" viewBox="0 0 7 4"><path d="M0 4H7L3.5 0.2Z" fill="#1a1a1a"/></svg></div>
<div class="a" style="left:894px;top:191px;width:15px;height:545px;box-sizing:border-box;border-left:1px solid #8e8e8e;border-top:1px solid #8e8e8e;border-right:1px solid #8e8e8e;border-radius:2px 2px 0 0;background:linear-gradient(90deg,#fbfbfb 0%,#ededed 38%,#d6d6d8 48%,#c6c6ca 85%,#d0d0d2 100%)"></div>
<div class="a" style="left:897px;top:463px"><svg width="9" height="10" viewBox="0 0 9 10" shape-rendering="crispEdges"><rect x="0" y="0" width="9" height="10" fill="#f6f6f6" opacity="0.75"/><path d="M1 1.5h2M1 4.5h2M1 7.5h2" stroke="#2e2e2e" stroke-width="1"/><path d="M3 1.5h2M3 4.5h2M3 7.5h2" stroke="#555" stroke-width="1"/><path d="M5 1.5h2M5 4.5h2M5 7.5h2" stroke="#7a7a7a" stroke-width="1"/><path d="M7 1.5h1M7 4.5h1M7 7.5h1" stroke="#9c9c9c" stroke-width="1"/></svg></div>
<div class="a" style="left:876.5px;top:722.5px;width:33px;height:33px;border-radius:50%;background:#fff"></div>

<!-- docker tabs -->
<div class="a" style="left:910px;top:98px;width:44px;height:704px;background:#fff"></div>
<div class="a" style="left:912px;top:100px;width:1px;height:700px;background:#c6c6c6"></div>
<div class="a" style="left:936px;top:100px;width:1px;height:700px;background:#c6c6c6"></div>
<div class="a" style="left:915px;top:98px;width:19px;height:704px;background:#e9e9e9"></div>
<div class="a" style="left:939px;top:98px;width:15px;height:704px;background:#e9e9e9"></div>
<div class="a" style="left:915px;top:117px;width:19px;height:103px;background:#b2b2b2"></div>
<div class="a" style="left:939px;top:117px;width:15px;height:80px;background:#d6d6d6"></div>
<div class="a" style="left:939px;top:197px;width:15px;height:149px;background:#ababab"></div>
<div class="a" style="left:920px;top:103px"><svg width="9" height="8" viewBox="0 0 9 8"><path d="M0.6 0.4L8.2 7.4M8.2 0.4L0.6 7.4" stroke="#a9a9a9" stroke-width="1.1"/></svg></div>
<div class="a" style="left:944px;top:103px"><svg width="9" height="8" viewBox="0 0 9 8"><path d="M0.6 0.4L8.2 7.4M8.2 0.4L0.6 7.4" stroke="#a9a9a9" stroke-width="1.1"/></svg></div>
<!-- align & distribute -->
<div class="a" style="left:917px;top:121px"><svg width="16" height="16" viewBox="0 0 16 16"><path d="M0.5 0V15" stroke="#1ba1e2" stroke-width="1" stroke-dasharray="1.6 1"/><rect x="2.6" y="3.4" width="12" height="4" fill="#c4c4c4" stroke="#3a3a3a" stroke-width="1"/><rect x="2.6" y="8.6" width="8" height="3.4" fill="#c4c4c4" stroke="#3a3a3a" stroke-width="1"/></svg></div>
<div class="a" style="left:930px;top:141px;width:70px;height:14px;line-height:14px;font-size:12px;white-space:nowrap;transform-origin:0 0;transform:rotate(90deg)">对齐与分布</div>
<div class="a" style="left:917px;top:238px"><svg width="16" height="16" viewBox="0 0 16 16"><circle cx="8" cy="8" r="7.7" fill="none" stroke="#b6b6b6" stroke-width="1"/><path d="M8 2.2V13.8M2.1 8H13.9" stroke="#a2a2a2" stroke-width="1.5"/></svg></div>
<!-- guidelines -->
<div class="a" style="left:941px;top:122px"><svg width="13" height="14" viewBox="0 0 13 14"><path d="M0 2.5H3M2.5 0V3" stroke="#1e1e1e" stroke-width="1.4"/><path d="M4.4 2.5H13" stroke="#1e1e1e" stroke-width="1.2" stroke-dasharray="2.4 1.4"/><path d="M2.5 4.4V14" stroke="#1e1e1e" stroke-width="1.2" stroke-dasharray="2.4 1.4"/></svg></div>
<div class="a" style="left:954px;top:141px;width:50px;height:14px;line-height:14px;font-size:12px;white-space:nowrap;transform-origin:0 0;transform:rotate(90deg)">辅助线</div>
<!-- fillet/scallop/chamfer -->
<div class="a" style="left:941px;top:201px"><svg width="13" height="15" viewBox="0 0 13 15"><path d="M0.6 14.4V6.2L6.2 0.6H13M0.6 14.4H13" fill="none" stroke="#2b2b2b" stroke-width="1.1"/><path d="M0.6 5V0.6H5" fill="none" stroke="#2b2b2b" stroke-width="1" stroke-dasharray="1 1"/></svg></div>
<div class="a" style="left:954px;top:221px;width:120px;height:14px;line-height:14px;font-size:12px;white-space:nowrap;transform-origin:0 0;transform:rotate(90deg)">圆角<span style="letter-spacing:1.7px">/</span>扇形角<span style="letter-spacing:1.7px">/</span>倒棱角</div>
<div class="a" style="left:941px;top:364px"><svg width="16" height="16" viewBox="0 0 16 16"><circle cx="8" cy="8" r="7.7" fill="none" stroke="#b6b6b6" stroke-width="1"/><path d="M8 2.2V13.8M2.1 8H13.9" stroke="#a2a2a2" stroke-width="1.5"/></svg></div>

<!-- page navigator + scrollbar -->
<div class="a" style="left:55px;top:765px;width:429px;height:16px;background:#f3f3f3"></div>
<div class="a" style="left:484px;top:765px;width:426px;height:16px;background:#fff"></div>
<div class="a" style="left:484px;top:765px;width:17px;height:16px;background:#ebebeb"></div>
<div class="a" style="left:37px;top:781px;width:873px;height:1px;background:#e4e4e4"></div>
<div class="a" style="left:54px;top:764px"><svg width="431" height="18" viewBox="0 0 431 18"><path d="M148.5 0.5L153.5 16.5H189.5L194.5 0.5Z" fill="#fff"/><path d="M0 0.5H148.5L153.5 16.5H189.5L194.5 0.5H429.5V17" fill="none" stroke="#808080" stroke-width="1"/></svg></div>
<div class="a" style="left:58px;top:768px"><svg width="9" height="10" viewBox="0 0 9 10"><path d="M0.5 3L3 0.5H8.5V9.5H0.5Z" fill="none" stroke="#7a7a7a" stroke-width="1"/><path d="M0.5 3H3V0.5" fill="none" stroke="#7a7a7a" stroke-width="0.8"/><path d="M4.5 3.4V8M2.2 5.7H6.8" stroke="#6a6a6a" stroke-width="1"/></svg></div>
<div class="a" style="left:74px;top:768px"><svg width="10" height="10" viewBox="0 0 10 10"><path d="M0.5 0V10" stroke="#b0b0b0" stroke-width="1"/><path d="M10 0V10L3 5Z" fill="#b8b8b8"/></svg></div>
<div class="a" style="left:91px;top:768px"><svg width="8" height="10" viewBox="0 0 8 10"><path d="M8 0V10L0.6 5Z" fill="#b8b8b8"/></svg></div>
<div class="lbl" style="left:105px;top:766px;line-height:14px;word-spacing:2px">1 的 1</div>
<div class="a" style="left:150px;top:768px"><svg width="8" height="10" viewBox="0 0 8 10"><path d="M0 0V10L7.4 5Z" fill="#b8b8b8"/></svg></div>
<div class="a" style="left:165px;top:768px"><svg width="10" height="10" viewBox="0 0 10 10"><path d="M9.5 0V10" stroke="#b0b0b0" stroke-width="1"/><path d="M0 0V10L7.6 5Z" fill="#b8b8b8"/></svg></div>
<div class="a" style="left:181px;top:768px"><svg width="9" height="10" viewBox="0 0 9 10"><path d="M0.5 3L3 0.5H8.5V9.5H0.5Z" fill="none" stroke="#7a7a7a" stroke-width="1"/><path d="M0.5 3H3V0.5" fill="none" stroke="#7a7a7a" stroke-width="0.8"/><path d="M4.5 3.4V8M2.2 5.7H6.8" stroke="#6a6a6a" stroke-width="1"/></svg></div>
<div class="lbl" style="left:214px;top:765px;line-height:14px;letter-spacing:0.5px">页1</div>
<div class="a" style="left:476px;top:767px"><svg width="5" height="11" viewBox="0 0 5 11" shape-rendering="crispEdges"><path d="M0 0.5h1m3 0h1M2 2.5h1M0 4.5h1m3 0h1M2 6.5h1M0 8.5h1m3 0h1M2 10.5h1" stroke="#b4b4b4" stroke-width="1"/></svg></div>
<div class="a" style="left:490px;top:769px"><svg width="5" height="8" viewBox="0 0 5 8"><path d="M4.6 0V7.4L0.2 3.7Z" fill="#1a1a1a"/></svg></div>
<div class="a" style="left:527px;top:765px;width:384px;height:15px;box-sizing:border-box;border:1px solid #9a9a9a;border-right:none;border-radius:2px 0 0 2px;background:linear-gradient(180deg,#fafafa 0%,#f0f0f0 35%,#d6d6d6 50%,#c6c6c8 80%,#dcdcdc 100%)"></div>
<div class="a" style="left:528px;top:780px;width:382px;height:1px;background:#ededed"></div>
<div class="a" style="left:693px;top:768px"><svg width="10" height="9" viewBox="0 0 10 9" shape-rendering="crispEdges"><rect x="0" y="0" width="10" height="9" fill="#f8f8f8" opacity="0.7"/><rect x="1" y="1" width="1" height="7" fill="#2e2e2e"/><rect x="4" y="1" width="1" height="7" fill="#2e2e2e"/><rect x="7" y="1" width="1" height="7" fill="#2e2e2e"/><rect x="2" y="1" width="1" height="7" fill="#8e8e8e" opacity="0.6"/><rect x="5" y="1" width="1" height="7" fill="#8e8e8e" opacity="0.6"/><rect x="8" y="1" width="1" height="7" fill="#8e8e8e" opacity="0.6"/></svg></div>
<div class="a" style="left:793px;top:768px"><svg width="10" height="9" viewBox="0 0 10 9" shape-rendering="crispEdges"><rect x="0" y="0" width="10" height="9" fill="#f8f8f8" opacity="0.7"/><rect x="1" y="1" width="1" height="7" fill="#2e2e2e"/><rect x="4" y="1" width="1" height="7" fill="#2e2e2e"/><rect x="7" y="1" width="1" height="7" fill="#2e2e2e"/><rect x="2" y="1" width="1" height="7" fill="#8e8e8e" opacity="0.6"/><rect x="5" y="1" width="1" height="7" fill="#8e8e8e" opacity="0.6"/><rect x="8" y="1" width="1" height="7" fill="#8e8e8e" opacity="0.6"/></svg></div>
<div class="a" style="left:893px;top:768px"><svg width="10" height="9" viewBox="0 0 10 9" shape-rendering="crispEdges"><rect x="0" y="0" width="10" height="9" fill="#f8f8f8" opacity="0.7"/><rect x="1" y="1" width="1" height="7" fill="#2e2e2e"/><rect x="4" y="1" width="1" height="7" fill="#2e2e2e"/><rect x="7" y="1" width="1" height="7" fill="#2e2e2e"/><rect x="2" y="1" width="1" height="7" fill="#8e8e8e" opacity="0.6"/><rect x="5" y="1" width="1" height="7" fill="#8e8e8e" opacity="0.6"/><rect x="8" y="1" width="1" height="7" fill="#8e8e8e" opacity="0.6"/></svg></div>
<!-- colour palette -->
<div class="a" style="left:39px;top:784px"><svg width="5" height="15" viewBox="0 0 5 15" shape-rendering="crispEdges"><path d="M0 0.5h1m3 0h1M2 2.5h1M0 4.5h1m3 0h1M2 6.5h1M0 8.5h1m3 0h1M2 10.5h1M0 12.5h1m3 0h1M2 14.5h1" stroke="#c0c0c0" stroke-width="1"/></svg></div>
<div class="a" style="left:52px;top:788px"><svg width="5" height="9" viewBox="0 0 5 9"><path d="M0 0V8.4L4.4 4.2Z" fill="#000"/></svg></div>
<div class="a" style="left:67px;top:786px"><svg width="13" height="13" viewBox="0 0 13 13"><path d="M8.2 3.2L9.8 4.8L2.4 12.2L0.6 12.4L0.8 10.6Z" fill="#f3f3f3" stroke="#2b2b2b" stroke-width="0.9"/><path d="M4 7.8L5.2 9L2.2 12L0.8 12.2L1 10.8Z" fill="#f06000"/><path d="M7.2 2.2L10.8 5.8L11.8 4.8L11.2 4.2L12.4 3Q13.2 1.8 12.1 0.8Q11.1 -0.2 10 0.6L8.8 1.8L8.2 1.2Z" fill="#2e2e2e"/></svg></div>
<div class="a" style="left:88px;top:788px"><svg width="8" height="9" viewBox="0 0 8 9"><path d="M7 0.4L1.2 4.5L7 8.6" fill="none" stroke="#c9c4bf" stroke-width="1.4"/></svg></div>
<div class="a" style="left:101px;top:783px;width:494px;height:18px;background:#4f4f4f"></div>
<div class="a" style="left:102px;top:784px;width:17px;height:16px;background:#fff"><svg width="16" height="16" viewBox="0 0 16 16"><path d="M0 0L16 16M16 0L0 16" stroke="#1a1a1a" stroke-width="0.9"/></svg></div>
<div class="a" style="left:119px;top:784px;width:17px;height:16px;background:#e60012"></div>
<div class="a" style="left:136px;top:784px;width:16px;height:16px;background:#4c4f4e"></div>
<div class="a" style="left:153px;top:784px;width:16px;height:16px;background:#7d7876"></div>
<div class="a" style="left:170px;top:784px;width:16px;height:16px;background:#77716f"></div>
<div class="a" style="left:187px;top:784px;width:16px;height:16px;background:#aea8a7"></div>
<div class="a" style="left:204px;top:784px;width:16px;height:16px;background:#a5a5a5"></div>
<div class="a" style="left:221px;top:784px;width:16px;height:16px;background:#8c8c8c"></div>
<div class="a" style="left:238px;top:784px;width:16px;height:16px;background:#7f7f7f"></div>
<div class="a" style="left:255px;top:784px;width:16px;height:16px;background:#8a8a8a"></div>
<div class="a" style="left:272px;top:784px;width:16px;height:16px;background:#848484"></div>
<div class="a" style="left:289px;top:784px;width:16px;height:16px;background:#717171"></div>
<div class="a" style="left:306px;top:784px;width:16px;height:16px;background:#000000"></div>
<div class="a" style="left:323px;top:784px;width:16px;height:16px;background:#626262"></div>
<div class="a" style="left:340px;top:784px;width:16px;height:16px;background:#7c7c7c"></div>
<div class="a" style="left:357px;top:784px;width:16px;height:16px;background:#6e6e6e"></div>
<div class="a" style="left:374px;top:784px;width:16px;height:16px;background:#8c8c8c"></div>
<div class="a" style="left:391px;top:784px;width:16px;height:16px;background:#858280"></div>
<div class="a" style="left:408px;top:784px;width:16px;height:16px;background:#e6e6e6"></div>
<div class="a" style="left:425px;top:784px;width:16px;height:16px;background:#d9dada"></div>
<div class="a" style="left:442px;top:784px;width:16px;height:16px;background:#fff100"></div>
<div class="a" style="left:459px;top:784px;width:16px;height:16px;background:#e6142a"></div>
<div class="a" style="left:476px;top:784px;width:16px;height:16px;background:#231815"></div>
<div class="a" style="left:493px;top:784px;width:16px;height:16px;background:#ffffff"></div>
<div class="a" style="left:510px;top:784px;width:16px;height:16px;background:#fff100"></div>
<div class="a" style="left:527px;top:784px;width:16px;height:16px;background:#1d2088"></div>
<div class="a" style="left:544px;top:784px;width:16px;height:16px;background:#f08300"></div>
<div class="a" style="left:561px;top:784px;width:16px;height:16px;background:#009944"></div>
<div class="a" style="left:578px;top:784px;width:16px;height:16px;background:#00a0e9"></div>
<div class="a" style="left:5px;top:802px;width:949px;height:1px;background:#dcdcdc"></div>
<div class="a" style="left:5px;top:803px;width:949px;height:4px;background:#f3f3f3"></div>
<div class="a" style="left:0;top:780px;width:11px;height:27px;box-sizing:border-box;border-top:1px solid #343846;border-right:1px solid #343846;background:linear-gradient(90deg,#4c5263 0%,#5c6274 55%,#585e70 100%);border-radius:0 3px 0 0"></div>
<div class="a" style="left:3px;top:787px"><svg width="5" height="20" viewBox="0 0 5 20" shape-rendering="crispEdges"><path d="M0 0.5H4M0 2.5H4M0 4.5H4M0 6.5H4M0 8.5H4M0 10.5H4M0 12.5H4M0 14.5H4M0 16.5H4M0 18.5H4" stroke="#2a2d38" stroke-width="1"/></svg></div>

</div>
</body>
</html>
